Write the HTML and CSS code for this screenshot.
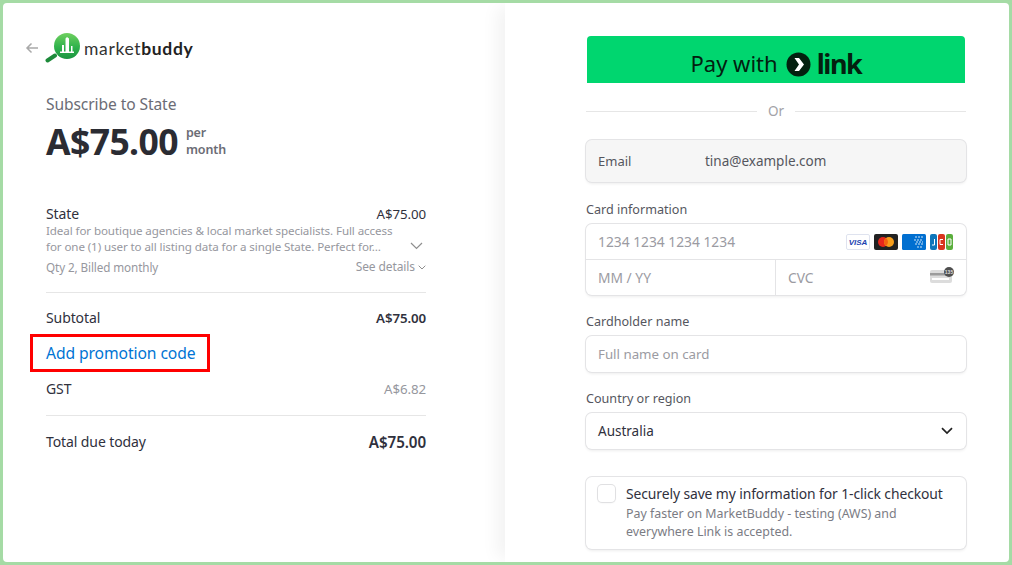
FILE: index.html
```html
<!DOCTYPE html>
<html lang="en">
<head>
<meta charset="utf-8">
<title>Subscribe to State</title>
<link rel="stylesheet" href="styles.css">
</head>
<body>
<main class="frame">
  <section class="summary">
    <header class="brand">
      <svg class="back" width="14" height="12" viewBox="0 0 14 12"><path d="M13 6H2M6.500 1.500 2 6l4.500 4.500" fill="none" stroke="#a9a9a9" stroke-width="1.500"/></svg>
      <svg class="logo-mark" width="36" height="30" viewBox="0 0 36 30">
        <defs><linearGradient id="mark" x1="0" y1="0" x2="0" y2="1"><stop offset="0" stop-color="#6fd05f"/><stop offset=".55" stop-color="#2fb24c"/><stop offset="1" stop-color="#1a9440"/></linearGradient></defs>
        <path d="M2.500 27.500 10 22.500" stroke="#1d8a3a" stroke-width="4" stroke-linecap="round"/>
        <circle cx="22" cy="13" r="13" fill="url(#mark)"/>
        <path d="M15 20h14v-1.500h-1.500V13H26v5.500h-2V5.500L22 4l-1.500 1.500v13h-1.500V12h-2v6.500h-2z" fill="#fff"/>
      </svg>
      <span class="wordmark">market<b>buddy</b></span>
    </header>
    <p class="subscribe">Subscribe to State</p>
    <div class="price-row">
      <span class="price">A$75.00</span>
      <span class="period">per<br>month</span>
    </div>
    <div class="item">
      <div class="line"><span class="item-name">State</span><span class="item-price">A$75.00</span></div>
      <div class="desc-row">
        <p class="desc">Ideal for boutique agencies &amp; local market specialists. Full access for one (1) user to all listing data for a single State. Perfect for…</p>
        <svg class="desc-chev" width="13" height="8" viewBox="0 0 13 8"><path d="M1 1l5.500 5.500L12 1" fill="none" stroke="#8f8f8f" stroke-width="1.200"/></svg>
      </div>
      <div class="line meta"><span>Qty 2, Billed monthly</span><span class="details">See details <svg width="8" height="5" viewBox="0 0 8 5"><path d="M.7.7 4 4 7.300.7" fill="none" stroke="#8f8f8f" stroke-width="1"/></svg></span></div>
    </div>
    <div class="totals">
      <div class="line"><span>Subtotal</span><strong>A$75.00</strong></div>
      <a class="promo" href="#">Add promotion code</a>
      <div class="line gst"><span>GST</span><span class="muted">A$6.82</span></div>
    </div>
    <div class="line total"><span>Total due today</span><strong>A$75.00</strong></div>
  </section>

  <section class="pay">
    <button class="link-btn" type="button"><span class="pay-with">Pay with</span>
      <svg width="25" height="25" viewBox="0 0 25 25"><circle cx="12.500" cy="12.500" r="12" fill="#03200f"/><path d="M8.500 6h4.500l5 6.500-5 6.500H8.500l4.500-6.500z" fill="#fff"/></svg>
      <b>link</b></button>
    <div class="or"><span>Or</span></div>
    <div class="field email"><span class="email-label">Email</span><span class="email-value">tina@example.com</span></div>

    <label class="label first">Card information</label>
    <div class="card-box">
      <div class="card-row">
        <span class="ph">1234 1234 1234 1234</span>
        <span class="brands">
          <svg width="24" height="16" viewBox="0 0 24 16"><rect x=".5" y=".5" width="23" height="15" rx="1.500" fill="#fff" stroke="#dfe3ef"/><text x="12" y="11.200" class="visa" text-anchor="middle">VISA</text></svg>
          <svg width="24" height="16" viewBox="0 0 24 16"><rect width="24" height="16" rx="2" fill="#222"/><circle cx="9" cy="8" r="5" fill="#e8271c"/><circle cx="15" cy="8" r="5" fill="#f79e1b"/><path d="M12 4a5 5 0 0 1 0 8 5 5 0 0 1 0-8z" fill="#f4610f"/></svg>
          <svg width="24" height="16" viewBox="0 0 24 16"><rect width="24" height="16" rx="1.500" fill="#016fd0"/><path d="M13 3h8M12 6h9M14 8h7M13 10h8M15 13h6" stroke="#cfe5f8" stroke-width="1.200" stroke-dasharray="2 1"/></svg>
          <svg width="23" height="16" viewBox="0 0 23 16"><rect width="7" height="16" rx="2" fill="#0e76ba"/><rect x="8" width="7" height="16" rx="2" fill="#d8351e"/><rect x="16" width="7" height="16" rx="2" fill="#5aae3c"/><path d="M4.500 5v6H2M13 5.500h-3v5h3M18 5h3v6h-3z" fill="none" stroke="#fff" stroke-width="1"/></svg>
        </span>
      </div>
      <div class="card-split">
        <span class="ph exp">MM / YY</span>
        <span class="ph cvc">CVC
          <svg class="cvc-icon" width="24" height="17" viewBox="0 0 24 17"><rect y="3" width="22" height="13" rx="2" fill="#dcdcdc"/><rect y="6" width="22" height="2.500" fill="#9c9c9c"/><rect x="2" y="11" width="17" height="2" fill="#fff"/><circle cx="19" cy="5" r="5" fill="#4f4f4f"/><text x="19" y="7" class="cvc-num" text-anchor="middle">135</text></svg>
        </span>
      </div>
    </div>

    <label class="label after-card">Cardholder name</label>
    <div class="field input"><span class="ph">Full name on card</span></div>

    <label class="label">Country or region</label>
    <div class="field select"><span>Australia</span>
      <svg width="12" height="8" viewBox="0 0 12 8"><path d="M1 1.200 6 6l5-4.800" fill="none" stroke="#222" stroke-width="1.700"/></svg>
    </div>

    <div class="save">
      <span class="check"></span>
      <div class="save-text">
        <p class="save-title">Securely save my information for 1-click checkout</p>
        <p class="save-sub">Pay faster on MarketBuddy - testing (AWS) and everywhere Link is accepted.</p>
      </div>
    </div>
  </section>
</main>
</body>
</html>
```

FILE: styles.css
```css
* { box-sizing: border-box; }
html, body { margin: 0; padding: 0; }
body {
  width: 1012px;
  height: 565px;
  overflow: hidden;
  background: #a5dba5;
  font-family: "Noto Sans", "Open Sans", sans-serif;
  color: #30313d;
}
p { margin: 0; }
.frame {
  display: flex;
  width: 1012px;
  height: 565px;
  border: 3px solid #a5dba5;
  border-radius: 7px;
  background: #fff;
  overflow: hidden;
}
.summary {
  width: 502px;
  flex: none;
  padding: 28px 79px 0 43px;
  letter-spacing: -0.1px;
}
.brand {
  display: flex;
  align-items: center;
  height: 34px;
  margin-left: -21px;
}
.back { margin-right: 6px; }
.logo-mark { flex: none; }
.wordmark {
  margin-left: 3px;
  font-family: "Lato", sans-serif;
  font-size: 17.500px;
  letter-spacing: .65px;
  color: #333;
  font-weight: 400;
}
.wordmark b { font-weight: 700; color: #222; }
.subscribe {
  margin-top: 29px;
  font-size: 15.600px;
  line-height: 20px;
  color: #6b6c75;
}
.price-row {
  display: flex;
  align-items: center;
  margin-top: 4px;
}
.price {
  font-size: 35.500px;
  line-height: 46px;
  font-weight: 700;
  letter-spacing: -.6px;
  color: #2b2c33;
}
.period {
  margin-left: 8px;
  font-size: 12.500px;
  line-height: 17px;
  font-weight: 600;
  color: #6b6c75;
}
.item {
  margin-top: 41px;
  padding-bottom: 17px;
  border-bottom: 1px solid #e6e6e6;
}
.line {
  display: flex;
  justify-content: space-between;
  align-items: center;
  font-size: 14px;
  line-height: 18px;
}
.item-price { font-size: 13.300px; }
.desc-row {
  display: flex;
  align-items: center;
  justify-content: space-between;
  padding-right: 3px;
}
.desc {
  width: 352px;
  font-size: 11.600px;
  line-height: 16px;
  color: #96979e;
}
.desc-chev { margin-top: 14px; }
.meta {
  margin-top: 4px;
  font-size: 11.700px;
  line-height: 16px;
  color: #96979e;
}
.details { display: inline-flex; align-items: center; gap: 3px; font-size: 12px; }
.totals { padding-top: 16px; padding-bottom: 17px; border-bottom: 1px solid #e6e6e6; }
.totals strong, .total strong { font-weight: 600; font-size: 13.300px; }
.promo {
  display: block;
  width: 180px;
  margin: 7px 0 8px -16px;
  padding: 4px 0 0 13px;
  height: 38px;
  border: 3px solid #f00;
  font-size: 15.700px;
  line-height: 25px;
  color: #0074d4;
  text-decoration: none;
  white-space: nowrap;
}
.muted { color: #96979e; font-size: 13.300px; }
.total { margin-top: 17px; }
.total strong { font-size: 15.200px; }

.pay {
  flex: 1;
  padding: 33px 43px 0 81px;
  box-shadow: -12px 0 16px -4px rgba(0, 0, 0, .05);
  font-size: 13.500px;
}
.link-btn {
  display: flex;
  align-items: center;
  justify-content: center;
  gap: 8px;
  width: 378px;
  height: 47px;
  margin-left: 1px;
  padding: 10px 0 0;
  border: 0;
  border-radius: 4px 4px 0 0;
  background: #00d66f;
  color: #03200f;
  font: inherit;
  font-size: 22px;
}
.pay-with { margin-bottom: 3px; }
.link-btn b { font-size: 27px; line-height: 27px; margin: 0 0 2px -2px; letter-spacing: -1.400px; }
.or {
  display: flex;
  align-items: center;
  gap: 11px;
  margin-top: 19px;
  height: 18px;
  color: #a3a3a8;
  font-size: 13.500px;
}
.or::before, .or::after {
  content: "";
  flex: 1;
  height: 1px;
  background: #e6e6e6;
}
.field, .card-box, .save {
  border-radius: 6px;
  background: #fff;
  box-shadow: 0 0 0 1px #e4e4e6, 0 2px 3px rgba(0, 0, 0, .07);
}
.field {
  display: flex;
  align-items: center;
  height: 42px;
  padding: 0 12px;
  width: 380px;
}
.email {
  margin-top: 20px;
  background: #f6f6f6;
  color: #55565e;
}
.email-label { width: 107px; font-size: 13px; }
.email-value { font-size: 13.500px; }
.label {
  display: block;
  margin-top: 19px;
  margin-bottom: 6px;
  font-size: 12.600px;
  line-height: 16px;
  color: #55565e;
}
.label.first { margin-top: 20px; }
.ph { color: #9b9ba2; font-size: 13.800px; }
.card-box { width: 380px; height: 71px; }
.card-row {
  display: flex;
  align-items: center;
  justify-content: space-between;
  height: 36px;
  padding: 0 13px 0 12px;
  border-bottom: 1px solid #e4e4e6;
}
.brands { display: flex; gap: 4px; }
.brands svg { flex: none; }
.visa { font: italic 700 8px "Liberation Sans", sans-serif; fill: #1a3fb0; }
.card-split { display: flex; height: 35px; }
.exp { display: flex; align-items: center; width: 190px; padding-left: 12px; border-right: 1px solid #e4e4e6; }
.cvc { flex: 1; display: flex; align-items: center; justify-content: space-between; padding: 0 12px 0 12px; }
.cvc-icon { margin-bottom: 4px; }
.cvc-num { font: 700 5px "Liberation Sans", sans-serif; fill: #ddd; }
.input { height: 36px; }
.input .ph { font-size: 13.300px; }
.select { height: 36px; justify-content: space-between; color: #30313d; padding-right: 13px; }
.save {
  display: flex;
  gap: 11px;
  width: 380px;
  height: 72px;
  margin-top: 28px;
  padding: 8px 12px;
}
.check {
  flex: none;
  width: 17px;
  height: 17px;
  border-radius: 4px;
  background: #fff;
  box-shadow: 0 0 0 1px #e0e0e2, 0 1px 2px rgba(0, 0, 0, .08);
}
.save-title { font-size: 13.900px; line-height: 18px; color: #30313d; letter-spacing: -.1px; white-space: nowrap; }
.save-sub { margin-top: 2px; font-size: 12.400px; line-height: 18px; color: #7b7c84; width: 300px; }
```
